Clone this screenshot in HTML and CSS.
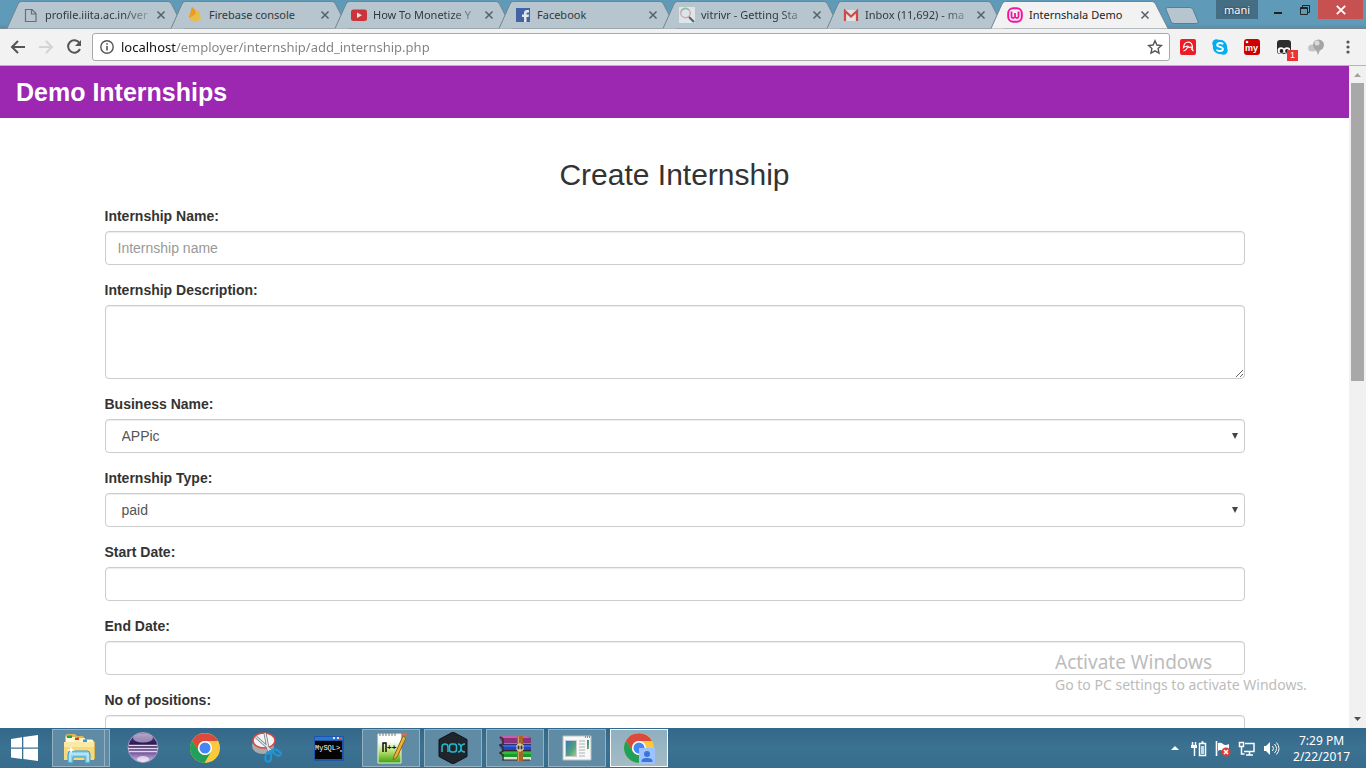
FILE: index.html
```html
<!DOCTYPE html>
<html lang="en">
<head>
<meta charset="utf-8">
<title>Internshala Demo</title>
<link rel="stylesheet" href="styles.css">
</head>
<body>
<svg class="defs" aria-hidden="true">
  <symbol id="close" viewBox="0 0 10 10"><path d="M1.5 1.5 8.5 8.5M8.5 1.5 1.5 8.5" stroke="currentColor" stroke-width="1.500" fill="none"/></symbol>
  <symbol id="tab-shape" viewBox="0 0 178 28" preserveAspectRatio="none"><path d="M0 27.5 11 3Q12 .5 14.500 .5H161Q163.500 .5 164.500 3L177 27.500" stroke="#71858f"/></symbol>
  <symbol id="chrome" viewBox="0 0 30 30">
    <circle cx="15" cy="15" r="15" fill="#fbc93d"/>
    <path d="M2 7.500A15 15 0 0 1 28 8H15A7 7 0 0 0 8.500 18Z" fill="#db4a3d"/>
    <path d="M2 7.500A15 15 0 0 0 14.500 30L21 18.500A7 7 0 0 1 9 18.500Z" fill="#22a05b"/>
    <circle cx="15" cy="15" r="7" fill="#fff"/><circle cx="15" cy="15" r="5.500" fill="#4486f4"/>
  </symbol>
</svg>

<header class="tabstrip">
  <nav class="tabs" aria-label="Open tabs">
    <div class="tab">
      <svg class="tab-bg"><use href="#tab-shape"/></svg>
      <svg class="favicon" viewBox="0 0 16 16"><path d="M2.500 2.500h6.500l4 4v8h-10.500zM8.500 2.500v4.500h4.500" fill="none" stroke="#65717a" stroke-width="1.200"/></svg>
      <span class="tab-title fade">profile.iiita.ac.in/ver</span>
      <button class="tab-close" aria-label="Close tab"><svg><use href="#close"/></svg></button>
    </div>
    <div class="tab">
      <svg class="tab-bg"><use href="#tab-shape"/></svg>
      <svg class="favicon" viewBox="0 0 16 16"><path d="M5 0 2 11l9-5z" fill="#e99432"/><path d="m10 3-8 9 6 3 6-3-2-9-2 3z" fill="#e8bd45"/><path d="M5 0 9 7 2 11z" fill="#ed9b24"/></svg>
      <span class="tab-title">Firebase console</span>
      <button class="tab-close" aria-label="Close tab"><svg><use href="#close"/></svg></button>
    </div>
    <div class="tab">
      <svg class="tab-bg"><use href="#tab-shape"/></svg>
      <svg class="favicon" viewBox="0 0 16 16"><rect y="2.500" width="16" height="11.500" rx="2.500" fill="#cb343b"/><path d="m6 5.500 5 2.700-5 2.700z" fill="#e9e4e7"/></svg>
      <span class="tab-title fade">How To Monetize Y</span>
      <button class="tab-close" aria-label="Close tab"><svg><use href="#close"/></svg></button>
    </div>
    <div class="tab">
      <svg class="tab-bg"><use href="#tab-shape"/></svg>
      <svg class="favicon" viewBox="0 0 16 16"><path d="M1 1h14v14H1z" fill="#4364a4"/><path d="M9 15V10H7V7.500h2V6q0-3 3-3h2v2.500h-1.300q-1.200 0-1.200 1V7.500H14L13.600 10h-2.100v5z" fill="#e2e7ee"/></svg>
      <span class="tab-title">Facebook</span>
      <button class="tab-close" aria-label="Close tab"><svg><use href="#close"/></svg></button>
    </div>
    <div class="tab">
      <svg class="tab-bg"><use href="#tab-shape"/></svg>
      <svg class="favicon" viewBox="0 0 16 16"><path d="M0 0h16v16H0z" fill="#dce5e9"/><circle cx="6.500" cy="6" r="4.700" fill="none" stroke="#d8a8a4" stroke-width="1.500"/><path d="M2 4.500A5 5 0 0 1 10 3" fill="none" stroke="#8ebf9f" stroke-width="1.500"/><path d="m10 10 5 5" stroke="#555d62" stroke-width="2"/></svg>
      <span class="tab-title fade">vitrivr - Getting Sta</span>
      <button class="tab-close" aria-label="Close tab"><svg><use href="#close"/></svg></button>
    </div>
    <div class="tab">
      <svg class="tab-bg"><use href="#tab-shape"/></svg>
      <svg class="favicon" viewBox="0 0 16 16"><path d="M1 3h14v11H1z" fill="#dfe2e4"/><path d="M2 14V4l6 5.500L14 4v10" fill="none" stroke="#cc4b45" stroke-width="2.200"/></svg>
      <span class="tab-title fade">Inbox (11,692) - ma</span>
      <button class="tab-close" aria-label="Close tab"><svg><use href="#close"/></svg></button>
    </div>
    <div class="tab active">
      <svg class="tab-bg"><use href="#tab-shape"/></svg>
      <svg class="favicon" viewBox="0 0 16 16"><rect x="1.200" y="1.200" width="13.600" height="13.600" rx="5" fill="none" stroke="#f3169c" stroke-width="2"/><path d="M4.500 4.500v5q0 1.500 1.500 1.500t2-1.500V6v3.500q.5 1.500 2 1.500t1.500-1.500v-5" fill="none" stroke="#f3169c" stroke-width="1.800"/></svg>
      <span class="tab-title">Internshala Demo</span>
      <button class="tab-close" aria-label="Close tab"><svg><use href="#close"/></svg></button>
    </div>
    <button class="new-tab" aria-label="New tab"><svg viewBox="0 0 34 17"><path d="M2.500 .5H25q2 0 3 2l5 12q.5 2-1.500 2H9q-2 0-3-2L1 2.500Q.5 .5 2.500 .5Z" fill="#b7c5ce" stroke="#527f99"/></svg></button>
  </nav>
  <div class="window-controls">
    <button class="profile">mani</button>
    <button class="win-btn" aria-label="Minimize"><svg viewBox="0 0 12 12"><path d="M1 9h8" stroke="#222" stroke-width="2"/></svg></button>
    <button class="win-btn" aria-label="Restore"><svg viewBox="0 0 12 12"><path d="M1.500 3.500h7v7h-7zM1.500 4.500h7M3.500 3.500v-2h7v7H9" fill="none" stroke="#222"/></svg></button>
    <button class="win-close" aria-label="Close window"><svg><use href="#close"/></svg></button>
  </div>
</header>

<div class="toolbar">
  <div class="nav-buttons">
    <button aria-label="Back"><svg viewBox="0 0 16 16"><path d="M15 8H2M8 2 2 8l6 6" fill="none" stroke="#555" stroke-width="2"/></svg></button>
    <button aria-label="Forward" disabled><svg viewBox="0 0 16 16"><path d="M1 8h13M8 2l6 6-6 6" fill="none" stroke="#d4d4d4" stroke-width="2"/></svg></button>
    <button aria-label="Reload"><svg viewBox="0 0 16 16"><path d="M13.500 4A6.200 6.200 0 1 0 14 10" fill="none" stroke="#555" stroke-width="2"/><path d="M15 1v6H9z" fill="#555"/></svg></button>
  </div>
  <div class="omnibox">
    <svg class="info" viewBox="0 0 14 14"><circle cx="7" cy="7" r="6.200" fill="none" stroke="#555" stroke-width="1.400"/><path d="M7 6v4.500M7 3.300v1.500" stroke="#555" stroke-width="1.600"/></svg>
    <input class="address" type="text" aria-label="Address" value="localhost/employer/internship/add_internship.php">
    <button aria-label="Bookmark"><svg viewBox="0 0 16 16"><path d="m8 1.800 1.900 4.200 4.600.5-3.400 3.100.9 4.600-4-2.300-4 2.300.9-4.600-3.400-3.100 4.600-.5z" fill="none" stroke="#555" stroke-width="1.400"/></svg></button>
  </div>
  <div class="extensions">
    <button aria-label="Avira"><svg viewBox="0 0 16 16"><rect width="16" height="16" rx="2" fill="#ed1c24"/><path d="M3.500 8.500Q4 3 8.500 3q4 .5 4 6Q11 7.500 9 8.500 8 6.500 6 7.500q-1.500 0-2.500 1z" fill="none" stroke="#fff" stroke-width="1.200"/><path d="M7.500 7.500Q7 11 3.500 12M11 9.500l2.500 2.500" fill="none" stroke="#fff" stroke-width="1.200"/></svg></button>
    <button aria-label="Skype"><svg viewBox="0 0 16 16"><circle cx="8" cy="8" r="7.200" fill="#00aff0"/><circle cx="4.500" cy="4.500" r="4.200" fill="#00aff0"/><circle cx="11.500" cy="11.500" r="4.200" fill="#00aff0"/><path d="M11 5.300Q10.500 4 8 4T5.200 6C5.200 8.500 10.900 7.300 10.900 10q0 2-2.900 2T5 10.500" fill="none" stroke="#fff" stroke-width="1.900"/></svg></button>
    <button class="my" aria-label="my"><svg viewBox="0 0 16 16"><rect width="16" height="16" rx="3" fill="#c00"/><circle cx="3" cy="3" r="1.300" fill="#fff"/><text x="1" y="12">my</text></svg></button>
    <button class="tamper" aria-label="Tampermonkey"><svg viewBox="0 0 16 16"><path d="M4 1h8q3 0 3 3v8q0 3-3 3H4q-3 0-3-3V4q0-3 3-3" fill="#2d2d2d"/><circle cx="5" cy="11.500" r="3.300" fill="#fff"/><circle cx="11" cy="11.500" r="3.300" fill="#fff"/><circle cx="5.500" cy="12" r="1.900" fill="#222"/><circle cx="11" cy="12" r="1.900" fill="#222"/></svg><span class="badge">1</span></button>
    <button aria-label="Balloon"><svg viewBox="0 0 16 16"><ellipse cx="4.500" cy="9" rx="4.500" ry="3.500" fill="#c4c4c4"/><circle cx="10.500" cy="6" r="5.500" fill="#a5a5a5"/><circle cx="9" cy="4" r="2.500" fill="#dadada"/><path d="m8 11 2 5 2-5z" fill="#aaa"/></svg></button>
    <button aria-label="Menu"><svg viewBox="0 0 16 16"><g fill="#555"><circle cx="8" cy="3" r="1.600"/><circle cx="8" cy="8" r="1.600"/><circle cx="8" cy="13" r="1.600"/></g></svg></button>
  </div>
</div>

<div class="viewport">
  <div class="page">
    <header class="site-header"><h1>Demo Internships</h1></header>
    <main class="container">
      <h2>Create Internship</h2>
      <form>
        <div class="form-group"><label for="name">Internship Name:</label><input id="name" class="form-control" type="text" placeholder="Internship name"></div>
        <div class="form-group"><label for="description">Internship Description:</label><textarea id="description" class="form-control"></textarea></div>
        <div class="form-group"><label for="business">Business Name:</label><div class="select-wrap"><select id="business" class="form-control"><option>APPic</option></select></div></div>
        <div class="form-group"><label for="type">Internship Type:</label><div class="select-wrap"><select id="type" class="form-control"><option>paid</option><option>unpaid</option></select></div></div>
        <div class="form-group"><label for="start">Start Date:</label><input id="start" class="form-control" type="text"></div>
        <div class="form-group"><label for="end">End Date:</label><input id="end" class="form-control" type="text"></div>
        <div class="form-group"><label for="positions">No of positions:</label><input id="positions" class="form-control" type="text"></div>
      </form>
    </main>
  </div>
  <div class="scrollbar" aria-hidden="true">
    <svg viewBox="0 0 17 17"><path d="m5 11 3.500-4 3.500 4z" fill="#a3a3a3"/></svg>
    <div class="track"><div class="thumb"></div></div>
    <svg viewBox="0 0 17 17"><path d="m5 6 3.500 4L12 6z" fill="#505050"/></svg>
  </div>
  <aside class="watermark"><p class="watermark-title">Activate Windows</p><p>Go to PC settings to activate Windows.</p></aside>
</div>

<footer class="taskbar">
  <button class="start" aria-label="Start"><svg viewBox="0 0 28 26"><path d="M0 4 11 2.300V12.500H0zM12.300 2 27 0v12.500H12.300zM0 13.700h11V24L0 22.400zM12.300 13.700H27V26l-14.700-2z" fill="#fff"/></svg></button>
  <div class="apps">
    <button class="task open stack" aria-label="File Explorer"><svg viewBox="0 0 32 32">
      <path d="M2 27V4l2-2h8l2 2h6l2 3h7l3 3v17z" fill="#d8b75c"/><path d="M3 5h11v5H3z" fill="#fff9dc"/><path d="M4 3.500h5v2.500H4z" fill="#15a844"/><path d="M11 6h11v4H11z" fill="#fff2bb"/><path d="M12 5.500h4V8h-4z" fill="#d93c25"/><path d="M18 8h12v4H18z" fill="#fff7d5"/><path d="M20 7.500h4V10h-4z" fill="#2c9be0"/>
      <path d="M1 10h30v18H1z" fill="#f3d97f"/><path d="M1 10h30v5H1z" fill="#fae9a5"/><path d="M5 31V22q0-3 3-3h16q3 0 3 3v9h-5v-6H10v6z" fill="#8fd2ea" stroke="#3d9bc6"/><path d="M7 29v-7h18v7" fill="none" stroke="#d6f5ff"/><path d="m8 14 1 3 3 1-3 1-1 3-1-3-3-1 3-1z" fill="#fff"/></svg></button>
    <button class="task" aria-label="Eclipse"><svg viewBox="0 0 32 32"><defs><linearGradient id="orb" x2="0" y2="1"><stop stop-color="#8b79ad"/><stop offset=".2" stop-color="#493075"/><stop offset=".42" stop-color="#261549"/><stop offset=".65" stop-color="#6f4f98"/><stop offset="1" stop-color="#d9c9ea"/></linearGradient></defs><circle cx="16" cy="15.500" r="15" fill="url(#orb)" stroke="#a99cbf"/><path d="M2 13.500h28M1 16.500h30M2 19.500h28" stroke="#e2d8ee" stroke-width="1.300"/><ellipse cx="16" cy="6" rx="10" ry="4.500" fill="#d8cfe8" opacity=".6"/><ellipse cx="16" cy="27" rx="6" ry="3" fill="#fff" opacity=".6"/></svg></button>
    <button class="task" aria-label="Google Chrome"><svg><use href="#chrome" x="1" y="1" width="30" height="30"/></svg></button>
    <button class="task" aria-label="Snipping Tool"><svg viewBox="0 0 32 32"><ellipse cx="12" cy="14" rx="11" ry="8" fill="#aaa"/><ellipse cx="13" cy="8.500" rx="11" ry="7.500" fill="#f5f5f5" stroke="#d9453e" stroke-width="1.500"/><path d="m5 5 17 15M14 1l4 21" stroke="#717b83" stroke-width="3"/><path d="m5 5 17 15M14 1l4 21" stroke="#e5e8ea" stroke-width="1.400"/><path d="M20 19q4-4 10 2-1 5-6 1zM17 20q-4 4-2 9 6 3 5-7z" fill="none" stroke="#2194d4" stroke-width="2.200"/></svg></button>
    <button class="task mysql" aria-label="MySQL console"><svg viewBox="0 0 32 32"><path d="M1 4h30v25H1z" fill="#1f56a8"/><path d="M2 5h28v3H2z" fill="#2877d6"/><path d="M20 5h2v2h-2zM24 5h2v2h-2z" fill="#d3e8ff"/><path d="M27 5h2v2h-2z" fill="#e1523d"/><path d="M2 9h27v18H2z" fill="#050505"/><text x="2" y="18">MySQL&gt;</text><path d="M27 19h2" stroke="#fff"/></svg></button>
    <button class="task open notepad" aria-label="Notepad++"><svg viewBox="0 0 32 32"><defs><linearGradient id="note" x2="0" y2="1"><stop offset=".25" stop-color="#fff"/><stop offset=".6" stop-color="#b8e070"/><stop offset="1" stop-color="#3d9f10"/></linearGradient></defs><path d="M3 2h23v29H3z" fill="url(#note)" stroke="#e9f0e5"/><path d="M5 1v3m3-3v3m3-3v3m3-3v3m3-3v3m3-3v3" stroke="#777"/><path d="M8 20v-9h3v9" fill="none" stroke="#111" stroke-width="1.500"/><text x="12" y="18">++</text><path d="m19 24 9-20 3 2-9 19-4 3z" fill="#f2b134" stroke="#8c631c"/><path d="m27 3 1-3 4 2-1 3z" fill="#d76d57"/></svg></button>
    <button class="task open nox" aria-label="Nox"><svg viewBox="0 0 32 32"><path d="m16 0 14 7.500v17L16 32 2 24.500v-17z" fill="#20242b" stroke="#11151b"/><g fill="none" stroke="#23bad0" stroke-width="1.500"><path d="M5 20v-5q0-3 3-3t3 3v5M21 12q3 0 3 4t4 4M28 12q-4 0-4 4t-3 4"/><rect x="12.500" y="12" width="7" height="8" rx="2.500"/></g></svg></button>
    <button class="task open" aria-label="WinRAR"><svg viewBox="0 0 32 32"><path d="m0 5 4-1h24l4 2v6H4z" fill="#8d3179"/><path d="M2 4h26l3 2H4z" fill="#c063aa"/><path d="M3 11h29v3H3z" fill="#eee2cf"/><path d="m0 13 3-1h29v6H3z" fill="#1d46c0"/><path d="M3 14h29" stroke="#5d84ed"/><path d="M3 18h29v3H3z" fill="#e8e0d3"/><path d="m0 20 3-1h29v6H3z" fill="#149c2b"/><path d="M3 21h29" stroke="#5bd25f"/><path d="M3 25h29v3H3z" fill="#e5decb"/><path d="m1 5 3 2v5l-3 1 3 2v4l-3 2 3 2v5" fill="none" stroke="#352f33" stroke-width="1.500"/><path d="M3 12h29M3 18.500h29M3 28h28" stroke="#33272f"/><path d="M18 4h6v25h-6z" fill="#a56529"/><path d="M19.500 4v25" stroke="#d19c5c"/><path d="M18 13h6v5h-6zM21 11v9" fill="#38322c" stroke="#f0e8c9"/></svg></button>
    <button class="task open" aria-label="Document Viewer"><svg viewBox="0 0 32 32"><defs><linearGradient id="picture" x2="1" y2="1"><stop stop-color="#357cb1"/><stop offset=".6" stop-color="#54a184"/><stop offset="1" stop-color="#99d27f"/></linearGradient></defs><path d="M2 4h28v24H2z" fill="#f7f8f7" stroke="#b9c1c4"/><path d="M4 8h12v17H4z" fill="#ccc"/><path d="M5 9h10v15H5z" fill="url(#picture)"/><path d="M18 9h6m-6 3h6m-6 3h6m-6 3h6m-6 3h6m-6 3h6" stroke="#a9b3b9"/><path d="M26 8h2v9h-2z" fill="url(#picture)"/><path d="M24 5h1m1 0h1m1 0h1" stroke="#333"/></svg></button>
    <button class="task open current" aria-label="Chrome window"><svg viewBox="0 0 32 32"><use href="#chrome" x="1" y="1" width="30" height="30"/><path d="M16 16h16v16H16z" fill="#9cc3ff"/><circle cx="24" cy="22" r="3" fill="#3b74dd"/><path d="M18.500 30v-1q0-3 5.500-3t5.500 3v1z" fill="#3b74dd"/></svg></button>
  </div>
  <div class="tray">
    <button aria-label="Show hidden icons"><svg viewBox="0 0 18 18"><path d="m5 11 4-4 4 4z" fill="#fff"/></svg></button>
    <button aria-label="Power"><svg viewBox="0 0 18 18"><path d="M9.500 4.500h6v12h-6zM11.500 3h2M4.500 9v8M2.500 3v3m3-3v3" fill="none" stroke="#fff" stroke-width="1.500"/><path d="M1 6h6v3H1z" fill="#fff"/><path d="M11 7h3v8h-3z" fill="#cbd8df"/></svg></button>
    <button aria-label="Action Center"><svg viewBox="0 0 18 18"><path d="M2.500 2v15" stroke="#fff" stroke-width="1.600"/><path d="M4 4q3-1 5 1t6 0v7q-3 2-6 0t-5 0z" fill="#fff"/><circle cx="12" cy="13" r="4.500" fill="#df3c31"/><path d="m10 11 4 4m0-4-4 4" stroke="#fff" stroke-width="1.600"/></svg></button>
    <button aria-label="Network"><svg viewBox="0 0 18 18"><path d="M7 4.500h9v8H6M8 16h7M11.500 13v3M3.500 9v6h3M1.500 3.500h4v4h-4zM3.500 7v3" fill="none" stroke="#fff" stroke-width="1.500"/></svg></button>
    <button aria-label="Volume"><svg viewBox="0 0 18 18"><path d="M2 7h2l4-4v13l-4-4H2z" fill="#fff"/><path d="M10.500 7q2 2.500 0 5M12.500 5q4 4.500 0 9M14.500 3.500q5 6 0 12" fill="none" stroke="#fff"/></svg></button>
    <div class="clock"><time>7:29 PM</time><span>2/22/2017</span></div>
  </div>
</footer>
</body>
</html>
```
FILE: styles.css
```css
* { box-sizing: border-box; }
body {
  margin: 0;
  height: 100vh;
  display: flex;
  flex-direction: column;
  overflow: hidden;
  background: #fff;
  color: #333;
  font: 14px/20px "Liberation Sans", Arial, sans-serif;
}
button { padding: 0; border: 0; background: none; color: inherit; font: inherit; display: flex; align-items: center; justify-content: center; }
svg { display: block; flex: none; }
.defs { position: absolute; width: 0; height: 0; }

.tabstrip {
  display: flex;
  justify-content: space-between;
  flex: none;
  height: 29px;
  padding: 0 3px 0 7px;
  background: linear-gradient(#5f9ab9 24px, #5790ae 28px, #78868e 28px);
  font: 12px/16px "Noto Sans", sans-serif;
}
.tabs { display: flex; padding-top: 1px; }
.tab {
  position: relative;
  display: flex;
  align-items: center;
  gap: 6px;
  width: 178px;
  height: 28px;
  margin-right: -14px;
  padding: 0 19px 0 16px;
}
.tab-bg { position: absolute; inset: 0; width: 100%; height: 100%; fill: #b7c5ce; }
.tab.active { z-index: 1; }
.tab.active .tab-bg { fill: #f2f2f2; }
.favicon { position: relative; width: 16px; height: 16px; }
.tab-title {
  position: relative;
  flex: 1;
  white-space: nowrap;
  color: #2f3a40;
  font-size: 11px;
}
.tab-title.fade {
  -webkit-mask-image: linear-gradient(to right, #000 75%, rgba(0, 0, 0, .2));
  mask-image: linear-gradient(to right, #000 75%, rgba(0, 0, 0, .2));
}
.tab.active .tab-title { color: #222; }
.tab-close { position: relative; width: 10px; height: 16px; color: #55616a; }
.tab-close svg, .win-close svg { width: 10px; height: 10px; }
.new-tab { width: 34px; height: 17px; margin: 6px 0 0 10px; }
.new-tab svg { width: 34px; height: 17px; }
.window-controls { display: flex; height: 19px; }
.window-controls svg { width: 12px; height: 12px; }
.profile { width: 42px; margin-right: 8px; background: #456d84; color: #fff; font-size: 11px; text-shadow: 0 0 2px #222; }
.win-btn { width: 26px; }
.win-close { width: 45px; background: #c75050; color: #fff; }

.toolbar {
  display: flex;
  align-items: center;
  flex: none;
  height: 37px;
  padding: 0 10px;
  background: #f2f2f2;
  border-bottom: 1px solid #b5b5b5;
}
.nav-buttons { display: flex; gap: 12px; margin-right: 10px; }
.nav-buttons svg { width: 16px; height: 16px; }
.omnibox {
  flex: 1;
  display: flex;
  align-items: center;
  height: 28px;
  padding: 0 6px 0 7px;
  background: #fff;
  border: 1px solid #a9a9a9;
  border-radius: 3px;
}
.info { width: 14px; height: 14px; }
.address {
  flex: 1;
  height: 24px;
  padding: 0 0 0 7px;
  border: 0;
  outline: 0;
  font: 13px/24px "Noto Sans", sans-serif;
  color: #808080;
  background: linear-gradient(to right, #111 62px, #808080 62px);
  -webkit-background-clip: text;
  background-clip: text;
  -webkit-text-fill-color: transparent;
}
.omnibox button svg, .extensions svg { width: 16px; height: 16px; }
.extensions { display: flex; gap: 16px; margin-left: 10px; }
.extensions text { fill: #fff; font: bold 9px "Liberation Sans", sans-serif; }
.tamper { position: relative; }
.badge { position: absolute; right: -6px; bottom: -6px; width: 11px; height: 11px; background: #ee3333; color: #fff; font-size: 9px; line-height: 11px; }

.viewport { position: relative; flex: 1; min-height: 0; display: flex; overflow: hidden; }
.page { flex: 1; overflow: hidden; }
.site-header { padding: 11px 16px; background: #9c27b0; color: #fff; }
h1 { margin: 0; font-size: 25px; line-height: 30px; }
.container { max-width: 1140px; margin: 0 auto; }
h2 { margin: 40px 0 15px; text-align: center; font-size: 30px; line-height: 33px; font-weight: 400; }
.form-group { margin-bottom: 15px; }
label { display: block; margin-bottom: 5px; font-weight: 700; }
.form-control {
  display: block;
  width: 100%;
  height: 34px;
  padding: 6px 12px;
  border: 1px solid #ccc;
  border-radius: 4px;
  background: #fff;
  box-shadow: inset 0 1px 1px rgba(0, 0, 0, .075);
  color: #555;
  font: inherit;
}
.form-control::placeholder { color: #999; }
textarea.form-control { height: 74px; resize: vertical; }
select.form-control { appearance: none; padding: 6px 16px; }
.select-wrap { position: relative; }
.select-wrap::after {
  content: "";
  position: absolute;
  right: 7px;
  top: 14px;
  border: 3px solid transparent;
  border-top: 6px solid #444;
  border-bottom: 0;
}
.scrollbar { flex: none; display: flex; flex-direction: column; width: 17px; background: #f1f1f1; }
.scrollbar svg { width: 17px; height: 17px; }
.track { flex: 1; padding: 0 2px; }
.thumb { height: 47.5%; background: #a8a8a8; }
.watermark { position: absolute; right: 56px; bottom: 33px; width: 255px; color: #bcbcbc; font: 14px/20px "Noto Sans", sans-serif; white-space: nowrap; pointer-events: none; }
.watermark p { margin: 0; }
.watermark .watermark-title { font-size: 19px; line-height: 26px; }

.taskbar {
  flex: none;
  display: flex;
  align-items: center;
  height: 40px;
  background: linear-gradient(#34688a, #3b7191 50%, #376c8d);
  color: #fff;
}
.start { width: 50px; height: 40px; margin-right: 2px; }
.start svg { width: 28px; height: 26px; }
.apps { display: flex; gap: 4px; flex: 1; }
.task { width: 58px; height: 38px; border: 1px solid transparent; }
.task svg { width: 32px; height: 32px; }
.task.open { background: #5f8ba4; border-color: #93b1c2; }
.task.open.stack { padding-right: 5px; box-shadow: inset -4px 0 #5f8ba4, inset -5px 0 #93b1c2; }
.task.open.current { background: linear-gradient(#8fb0c0, #a3bcc6); border-color: #f4f8fa; }
.mysql text { fill: #fff; font: 7px "Liberation Mono", monospace; }
.notepad text { fill: #111; font: bold 8px "Liberation Sans", sans-serif; }
.tray { display: flex; align-items: center; gap: 6px; padding-right: 16px; }
.tray svg { width: 18px; height: 18px; }
.clock { display: flex; flex-direction: column; align-items: center; margin: 2px 0 0 7px; font: 12px/16px "Noto Sans", sans-serif; }
```
